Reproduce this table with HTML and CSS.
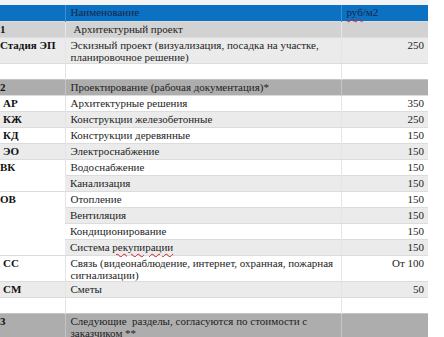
FILE: index.html
```html
<!DOCTYPE html>
<html lang="ru">
<head>
<meta charset="utf-8">
<link rel="stylesheet" href="styles.css">
</head>
<body>
<div class="top"></div>
<table class="price">
  <colgroup>
    <col class="c1"><col class="c2"><col class="c3">
  </colgroup>
  <tr class="head">
    <td></td>
    <td class="name">Наименование</td>
    <td class="unit"><span class="sq">руб</span>/м2</td>
  </tr>
  <tr class="sec1">
    <td class="code">1</td>
    <td class="sp">Архитектурный проект</td>
    <td></td>
  </tr>
  <tr class="lt dbl">
    <td class="code">Стадия ЭП</td>
    <td>Эскизный проект (визуализация, посадка на участке, планировочное решение)</td>
    <td class="num">250</td>
  </tr>
  <tr class="wh">
    <td></td><td></td><td></td>
  </tr>
  <tr class="sec">
    <td class="code">2</td>
    <td>Проектирование (рабочая документация)*</td>
    <td></td>
  </tr>
  <tr class="wh">
    <td class="code ind">АР</td>
    <td>Архитектурные решения</td>
    <td class="num">350</td>
  </tr>
  <tr class="lt">
    <td class="code ind">КЖ</td>
    <td>Конструкции железобетонные</td>
    <td class="num">250</td>
  </tr>
  <tr class="wh">
    <td class="code ind">КД</td>
    <td>Конструкции деревянные</td>
    <td class="num">150</td>
  </tr>
  <tr class="lt">
    <td class="code ind">ЭО</td>
    <td>Электроснабжение</td>
    <td class="num">150</td>
  </tr>
  <tr class="wh">
    <td class="code span" rowspan="2">ВК</td>
    <td>Водоснабжение</td>
    <td class="num">150</td>
  </tr>
  <tr class="lt">
    <td>Канализация</td>
    <td class="num">150</td>
  </tr>
  <tr class="wh">
    <td class="code span" rowspan="4">ОВ</td>
    <td>Отопление</td>
    <td class="num">150</td>
  </tr>
  <tr class="lt">
    <td>Вентиляция</td>
    <td class="num">150</td>
  </tr>
  <tr class="wh">
    <td>Кондиционирование</td>
    <td class="num">150</td>
  </tr>
  <tr class="lt">
    <td>Система <span class="sq">рекупирации</span></td>
    <td class="num">150</td>
  </tr>
  <tr class="wh dbl">
    <td class="code ind">СС</td>
    <td>Связь (видеонаблюдение, интернет, охранная, пожарная сигнализации)</td>
    <td class="num">От 100</td>
  </tr>
  <tr class="lt">
    <td class="code ind">СМ</td>
    <td>Сметы</td>
    <td class="num">50</td>
  </tr>
  <tr class="wh">
    <td></td><td></td><td></td>
  </tr>
  <tr class="sec dbl">
    <td class="code">3</td>
    <td>Следующие&nbsp; разделы, согласуются по стоимости с заказчиком **</td>
    <td></td>
  </tr>
</table>
</body>
</html>
```
FILE: styles.css
```css
html, body {
  margin: 0;
  padding: 0;
  background: #ffffff;
}
body {
  font-family: "Liberation Serif", "Times New Roman", serif;
  font-size: 11px;
  color: #1e1e1e;
  overflow: hidden;
}
.top {
  height: 5px;
  background: #f4f4f4;
  width: 428px;
}
.price {
  border-collapse: collapse;
  table-layout: fixed;
  width: 428px;
}
.c1 { width: 65px; }
.c2 { width: 276px; }
.c3 { width: 87px; }
.price td {
  height: 16px;
  padding: 1px 4px 0 5px;
  line-height: 12px;
  vertical-align: top;
  border-top: 1px solid #dcdcdc;
  border-left: 1px solid #e4e4e4;
  box-sizing: border-box;
}
.price td:first-child { border-left: none; }
.price td.code {
  font-weight: bold;
  padding-left: 0;
  color: #111;
}
.price td.ind { padding-left: 3px; }
.price td.span { background: #ffffff; }
.price td.num { text-align: right; padding-right: 4px; }
.price td.sp { padding-left: 8px; }
.dbl td { height: 25px; }
.head td {
  background: #0b71c2;
  color: #16264a;
  border-top: none;
  border-left-color: #3f8fd0;
  height: 16px;
}
.sec1 td { background: #d2d2d2; border-left-color: #e6e6e6; }
.sec td { background: #adadad; border-left-color: #c4c4c4; border-top-color: #c4c4c4; }
.lt td { background: #ebebeb; }
.wh td { background: #ffffff; }
.sq {
  text-decoration: underline wavy #d02020;
  text-decoration-thickness: 1px;
  text-underline-offset: 2px;
}
```
